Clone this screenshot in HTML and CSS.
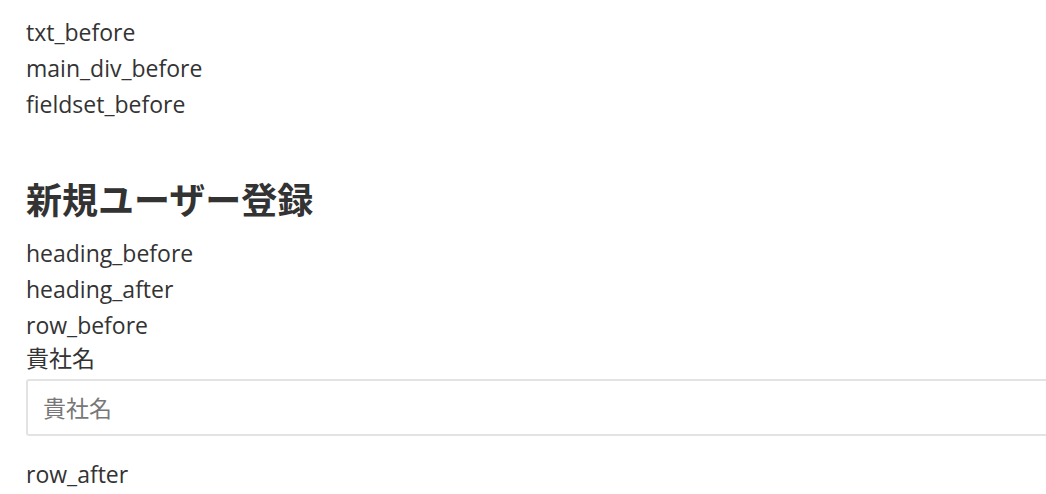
FILE: index.html
```html
<!DOCTYPE html>
<html lang="ja">
<head>
    <meta charset="UTF-8">
    <meta name="viewport" content="width=device-width, initial-scale=1.0">
    <title>新規ユーザー登録</title>
    <link rel="stylesheet" href="styles.css">
</head>
<body>
    <div class="page">
        <div class="line">txt_before</div>
        <div class="main">
            <div class="line">main_div_before</div>
            <fieldset class="box">
                <div class="line">fieldset_before</div>
                <h2 class="heading">新規ユーザー登録</h2>
                <div class="line">heading_before</div>
                <div class="line">heading_after</div>
                <div class="line">row_before</div>
                <div class="form-group">
                    <label for="company">貴社名</label>
                    <input type="text" id="company" name="company" placeholder="貴社名">
                </div>
                <div class="line">row_after</div>
            </fieldset>
        </div>
    </div>
</body>
</html>
```

FILE: styles.css
```css
body {
    margin: 0;
    font-family: "Open Sans", "Noto Sans CJK JP", sans-serif;
    font-size: 23px;
    color: #333;
    background-color: #fff;
}
.page {
    padding: 14px 0 0 26px;
    height: 494px;
    box-sizing: border-box;
    overflow: hidden;
}
.line {
    line-height: 36px;
}
.box {
    border: none;
    margin: 0;
    padding: 0;
    min-width: 0;
}
.heading {
    font-size: 36px;
    font-weight: bold;
    line-height: 44px;
    margin: 57px 0 12px;
}
.form-group label {
    display: block;
    line-height: 30px;
}
.form-group input {
    display: block;
    width: 1100px;
    height: 57px;
    box-sizing: border-box;
    margin: 6px 0 20px;
    padding: 0 15px;
    border: 2px solid #e3e3e3;
    border-radius: 3px;
    font-family: inherit;
    font-size: 23px;
    color: #333;
    outline: none;
}
.form-group input::placeholder {
    color: #777;
}
```
